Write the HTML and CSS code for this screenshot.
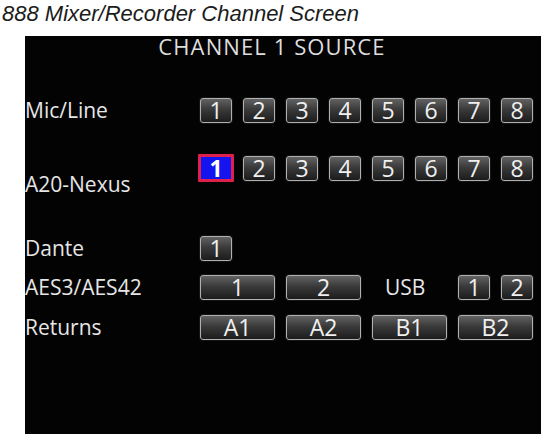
FILE: index.html
```html
<!DOCTYPE html>
<html>
<head>
<meta charset="utf-8">
<link rel="stylesheet" href="styles.css">
</head>
<body>
<div class="caption">888 Mixer/Recorder Channel Screen</div>
<div class="screen">
  <div class="heading">CHANNEL 1 SOURCE</div>

  <div class="row row-mic">
    <div class="label">Mic/Line</div>
    <div class="btns">
      <span class="btn">1</span><span class="btn">2</span><span class="btn">3</span><span class="btn">4</span><span class="btn">5</span><span class="btn">6</span><span class="btn">7</span><span class="btn">8</span>
    </div>
  </div>

  <div class="row row-nexus">
    <div class="label label-low">A20-Nexus</div>
    <div class="btns">
      <span class="btn sel">1</span><span class="btn">2</span><span class="btn">3</span><span class="btn">4</span><span class="btn">5</span><span class="btn">6</span><span class="btn">7</span><span class="btn">8</span>
    </div>
  </div>

  <div class="row row-dante">
    <div class="label">Dante</div>
    <div class="btns">
      <span class="btn">1</span>
    </div>
  </div>

  <div class="row row-aes">
    <div class="label">AES3/AES42</div>
    <div class="btns btns-fixed">
      <span class="btn wide">1</span><span class="btn wide">2</span>
      <span class="usb">USB</span>
      <span class="usb-pair"><span class="btn">1</span><span class="btn">2</span></span>
    </div>
  </div>

  <div class="row row-ret">
    <div class="label">Returns</div>
    <div class="btns btns-fixed">
      <span class="btn wide">A1</span><span class="btn wide">A2</span><span class="btn wide">B1</span><span class="btn wide">B2</span>
    </div>
  </div>
</div>
</body>
</html>
```

FILE: styles.css
```css
html, body {
  margin: 0;
  padding: 0;
  background: #ffffff;
}

.caption {
  font-family: "Liberation Sans", Arial, sans-serif;
  font-style: italic;
  font-size: 22px;
  line-height: 26px;
  color: #1c1c1c;
  padding: 1px 0 0 2px;
}

.screen {
  margin: 9px 0 0 25px;
  width: 516px;
  height: 398px;
  background: #030303;
  font-family: "Open Sans", "Noto Sans", sans-serif;
  color: #e6e6e6;
  display: flex;
  flex-direction: column;
}

.heading {
  font-size: 22px;
  line-height: 21px;
  letter-spacing: 1.1px;
  text-align: center;
  padding-right: 22px;
  color: #dedede;
}

.row {
  display: flex;
  align-items: center;
}

.label {
  width: 175px;
  flex: none;
  font-size: 21px;
  line-height: 21px;
}

.btns {
  display: flex;
  gap: 11px;
  align-items: center;
}

.btns-fixed {
  width: 333px;
}

.btn {
  box-sizing: border-box;
  width: 32px;
  height: 25px;
  border: 1px solid #b0b0b0;
  border-radius: 3px;
  background: linear-gradient(#626262, #3a3a3a 45%, #1c1c1c);
  box-shadow: 0 0 0 1px #141414;
  color: #f0f0f0;
  font-size: 23px;
  line-height: 23px;
  text-align: center;
}

.btn.wide {
  width: 75px;
}

.btn.sel {
  background: #1414f0;
  border: 3px solid #e0204c;
  border-radius: 1px;
  line-height: 22px;
  font-weight: 700;
  color: #ffffff;
  box-shadow: none;
  width: 36px;
  height: 28px;
  margin: 0 -2px 0 -2px;
}

.row-mic { margin-top: 41px; }

.row-nexus {
  margin-top: 31px;
  align-items: flex-start;
}

.label-low { margin-top: 20px; }

.row-dante { margin-top: 41px; }

.row-aes { margin-top: 14px; }

.usb {
  font-size: 21px;
  line-height: 21px;
  margin-left: 13px;
}

.usb-pair {
  display: flex;
  gap: 11px;
  margin-left: auto;
}

.row-ret { margin-top: 15px; }
```
